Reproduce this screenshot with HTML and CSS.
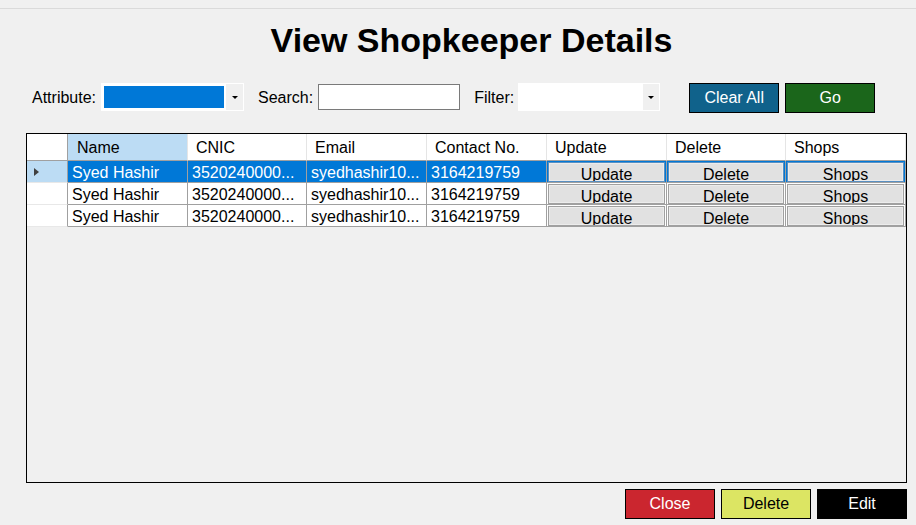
FILE: index.html
```html
<!DOCTYPE html>
<html>
<head>
<meta charset="utf-8">
<title>View Shopkeeper Details</title>
<link rel="stylesheet" href="styles.css">
</head>
<body>
<div class="topline"></div>
<h1 class="title">View Shopkeeper Details</h1>

<div class="toolbar">
  <span class="lbl lbl-attr">Attribute:</span>
  <div class="combo combo-attr">
    <div class="combo-value combo-value-sel"></div>
    <div class="combo-drop"><span class="arrow"></span></div>
  </div>
  <span class="lbl lbl-search">Search:</span>
  <div class="textbox"></div>
  <span class="lbl lbl-filter">Filter:</span>
  <div class="combo combo-filter">
    <div class="combo-value"></div>
    <div class="combo-drop"><span class="arrow"></span></div>
  </div>
  <div class="btn btn-clear">Clear All</div>
  <div class="btn btn-go">Go</div>
</div>

<div class="grid">
  <div class="hcell hcorner"></div>
  <div class="hcell hsel">Name</div>
  <div class="hcell">CNIC</div>
  <div class="hcell">Email</div>
  <div class="hcell">Contact No.</div>
  <div class="hcell">Update</div>
  <div class="hcell">Delete</div>
  <div class="hcell">Shops</div>

  <div class="rhead rhead-sel"><span class="tri"></span></div>
  <div class="cell sel">Syed Hashir</div>
  <div class="cell sel">3520240000...</div>
  <div class="cell sel">syedhashir10...</div>
  <div class="cell sel">3164219759</div>
  <div class="cell bcell sel"><div class="face">Update</div></div>
  <div class="cell bcell sel"><div class="face">Delete</div></div>
  <div class="cell bcell sel"><div class="face">Shops</div></div>

  <div class="rhead"></div>
  <div class="cell">Syed Hashir</div>
  <div class="cell">3520240000...</div>
  <div class="cell">syedhashir10...</div>
  <div class="cell">3164219759</div>
  <div class="cell bcell"><div class="face">Update</div></div>
  <div class="cell bcell"><div class="face">Delete</div></div>
  <div class="cell bcell"><div class="face">Shops</div></div>

  <div class="rhead"></div>
  <div class="cell">Syed Hashir</div>
  <div class="cell">3520240000...</div>
  <div class="cell">syedhashir10...</div>
  <div class="cell">3164219759</div>
  <div class="cell bcell"><div class="face">Update</div></div>
  <div class="cell bcell"><div class="face">Delete</div></div>
  <div class="cell bcell"><div class="face">Shops</div></div>
</div>

<div class="footer">
  <div class="btn btn-close">Close</div>
  <div class="btn btn-delete">Delete</div>
  <div class="btn btn-edit">Edit</div>
</div>
</body>
</html>
```
FILE: styles.css
```css
* { box-sizing: border-box; }

body {
  margin: 0;
  width: 916px;
  height: 525px;
  overflow: hidden;
  background: #f0f0f0;
  font-family: "Liberation Sans", Arial, sans-serif;
  font-size: 16px;
  color: #000;
}

.topline {
  height: 9px;
  border-bottom: 1px solid #dadada;
}

.title {
  margin: 11px 0 0 0;
  padding-left: 27px;
  height: 40px;
  line-height: 40px;
  font-size: 34px;
  font-weight: bold;
  text-align: center;
}

/* toolbar */
.toolbar {
  display: flex;
  align-items: flex-start;
  margin-top: 23px;
  padding-left: 32px;
  height: 30px;
}

.lbl {
  line-height: 29px;
  white-space: nowrap;
}
.lbl-attr { margin-right: 5px; }
.lbl-search { margin-left: 14px; margin-right: 5px; }
.lbl-filter { margin-left: 14px; margin-right: 4px; }

.combo {
  display: flex;
  height: 28px;
  padding: 1px;
  background: #fff;
}
.combo-attr { width: 143px; }
.combo-filter { width: 142px; }

.combo-value {
  flex: 1;
  margin: 2px 2px 2px 2px;
  background: #fff;
}
.combo-value-sel { background: #0078d7; }

.combo-drop {
  width: 17px;
  background: #f0f0f0;
  display: flex;
  align-items: center;
  justify-content: center;
}
.combo-filter .combo-drop { width: 16px; }

.arrow {
  width: 0;
  height: 0;
  border-left: 3px solid transparent;
  border-right: 3px solid transparent;
  border-top: 3px solid #000;
  margin-top: 1px;
}

.textbox {
  width: 142px;
  height: 26px;
  margin-top: 1px;
  background: #fff;
  border: 1px solid #7a7a7a;
}

.btn {
  width: 90px;
  height: 30px;
  line-height: 28px;
  border: 1px solid #000;
  text-align: center;
  white-space: nowrap;
}
.btn-clear {
  margin-left: 29px;
  background: #10628b;
  color: #fff;
}
.btn-go {
  margin-left: 6px;
  background: #1b661b;
  color: #fff;
}

/* data grid */
.grid {
  margin: 20px 0 0 26px;
  width: 881px;
  height: 350px;
  border: 1px solid #000;
  background: #f0f0f0;
  display: grid;
  grid-template-columns: 41px 120px 119px 120px 120px 120px 119px 120px;
  grid-template-rows: 27px 22px 22px 22px;
  align-content: start;
}

.hcell {
  background: #fff;
  border-right: 1px solid #e5e5e5;
  border-bottom: 1px solid #a0a0a0;
  padding-top: 1px;
  line-height: 25px;
  padding-left: 8px;
  white-space: nowrap;
  overflow: hidden;
}
.hcorner {
  border-right-color: #a0a0a0;
}
.hsel {
  background: #bcdcf4;
  padding-left: 9px;
}

.rhead {
  background: #fff;
  border-right: 1px solid #a0a0a0;
  border-bottom: 1px solid #e8e8e8;
  display: flex;
  align-items: center;
  padding-left: 7px;
}
.rhead-sel { background: #bcdcf4; }

.tri {
  width: 0;
  height: 0;
  border-top: 4px solid transparent;
  border-bottom: 4px solid transparent;
  border-left: 5px solid #404040;
  margin-top: 1px;
}

.cell {
  background: #fff;
  border-right: 1px solid #a0a0a0;
  border-bottom: 1px solid #a0a0a0;
  padding: 2px 0 0 4px;
  line-height: 19px;
  white-space: nowrap;
  overflow: hidden;
}
.cell.sel {
  background: #0078d7;
  color: #fff;
}

.bcell {
  padding: 1px 1px 0 1px;
}
.face {
  height: 20px;
  border: 1px solid #a0a0a0;
  box-shadow: inset 0 0 0 1px #ececec;
  background: #e1e1e1;
  color: #000;
  text-align: center;
  line-height: 17px;
  padding-top: 3px;
  overflow: hidden;
}
.cell.sel .face {
  border-color: #5a8fc0;
}

/* footer */
.footer {
  display: flex;
  justify-content: flex-end;
  gap: 6px;
  margin-top: 6px;
  padding-right: 9px;
}
.btn-close {
  background: #cb262f;
  color: #fff;
}
.btn-delete {
  background: #dce563;
  color: #000;
}
.btn-edit {
  background: #000;
  color: #fff;
}
```
